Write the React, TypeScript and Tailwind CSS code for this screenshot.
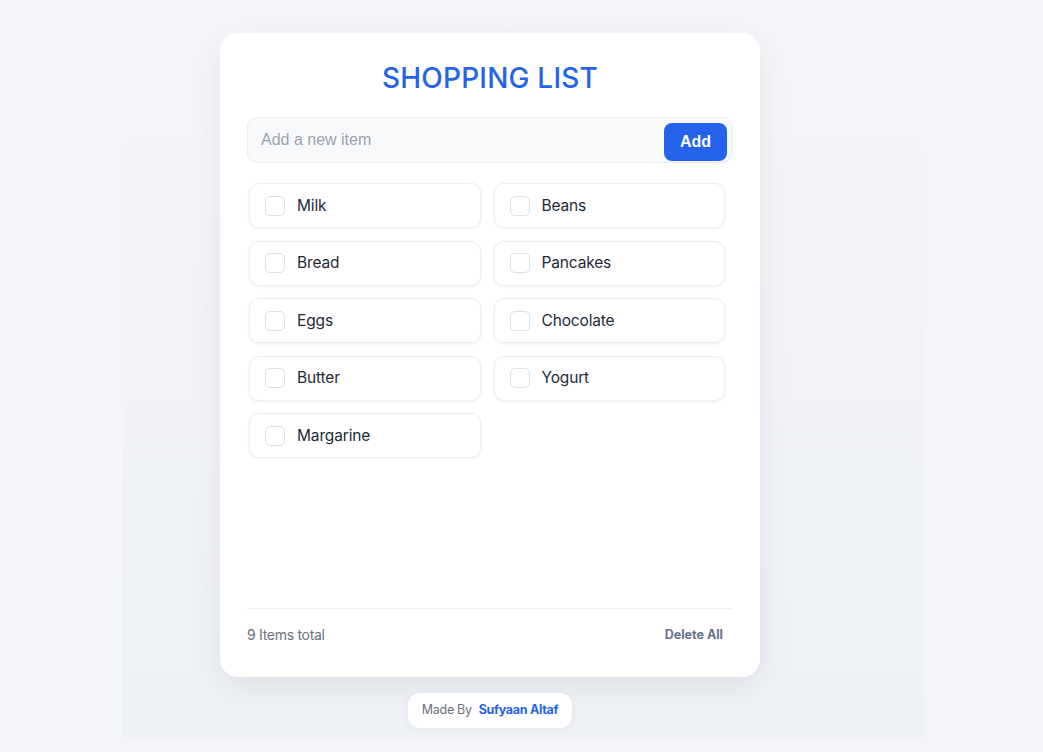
import { useState } from 'react';

const INITIAL = ['Milk', 'Beans', 'Bread', 'Pancakes', 'Eggs', 'Chocolate', 'Butter', 'Yogurt', 'Margarine'];

function ItemRow({ name }: Readonly<{ name: string }>) {
  return (
    <label className="h-[45px] flex items-center gap-3 pl-[15px] pr-3 bg-white rounded-[10px] border border-[#eceef2] shadow-[0_1px_3px_rgba(15,23,42,0.07)] cursor-pointer">
      <span className="w-5 h-5 rounded-[5px] border-[1.5px] border-[#d9e1ec] bg-white shrink-0" />
      <span className="text-[15.5px] text-[#1f2937] tracking-[-0.15px]">{name}</span>
    </label>
  );
}

export default function App() {
  const [items, setItems] = useState(INITIAL);
  const [text, setText] = useState('');

  const add = () => {
    if (!text.trim()) return;
    setItems((xs) => [...xs, text.trim()]);
    setText('');
  };

  return (
    <div
      className="min-h-[752px] bg-[#f5f6fa] pt-[10px] pb-[15px] flex justify-center"
      style={{ fontFamily: 'Inter, "Noto Sans", sans-serif' }}
    >
      <div className="w-[802px] h-[727px] ml-[3px] bg-gradient-to-b from-[#f6f7fa] to-[#eef1f5] flex flex-col items-center pr-[66px] pt-[23px]">
        {/* CARTE */}
        <div className="w-[540px] h-[644px] bg-white rounded-[18px] shadow-[0_10px_35px_rgba(15,23,42,0.08)] pt-[26px] px-[27px] pb-[32px] flex flex-col">
          <h1 className="text-[28px] leading-[38px] font-medium text-[#2563eb] text-center tracking-[0.2px]">
            SHOPPING LIST
          </h1>
          <div className="mt-[20px] h-[46px] flex items-center bg-[#f8f9fb] border border-[#e8ebef] rounded-[10px] pl-[13px] pr-[5px]">
            <input
              value={text}
              onChange={(e) => setText(e.target.value)}
              placeholder="Add a new item"
              className="flex-1 bg-transparent outline-none text-[16px] text-[#1f2937] placeholder:text-[#9aa3b0]"
              style={{ fontFamily: '"Liberation Sans", Arial, sans-serif' }}
            />
            <button
              onClick={add}
              className="mt-[4px] w-[63px] h-[38px] bg-[#2563eb] rounded-[8px] text-white text-[16px] font-bold"
              style={{ fontFamily: '"Liberation Sans", Arial, sans-serif' }}
            >
              Add
            </button>
          </div>
          <div className="flex-1 mt-[20px] pl-[2px] pr-[8px]">
            <div className="grid grid-cols-2 gap-x-[13px] gap-y-[12.5px]">
              {items.map((it, i) => (
                <ItemRow key={i} name={it} />
              ))}
            </div>
          </div>
          <div className="border-t border-[#eef0f3] pt-[16px] flex items-center justify-between">
            <span className="text-[14px] leading-[20px] text-[#6b7280] tracking-[-0.3px]">
              {items.length} Items total
            </span>
            <button
              onClick={() => setItems([])}
              className="text-[12.5px] leading-[20px] font-bold text-[#64748b] pr-[10px]"
            >
              Delete All
            </button>
          </div>
        </div>
        <div className="mt-[16px] h-[35px] px-[14px] bg-white rounded-[12px] shadow-[0_2px_8px_rgba(15,23,42,0.05)] flex items-center gap-[7px] text-[12.5px]">
          <span className="text-[#6b7280] tracking-[-0.3px]">Made By</span>
          <span className="font-bold text-[#2563eb] tracking-[-0.3px]">Sufyaan Altaf</span>
        </div>
      </div>
    </div>
  );
}
